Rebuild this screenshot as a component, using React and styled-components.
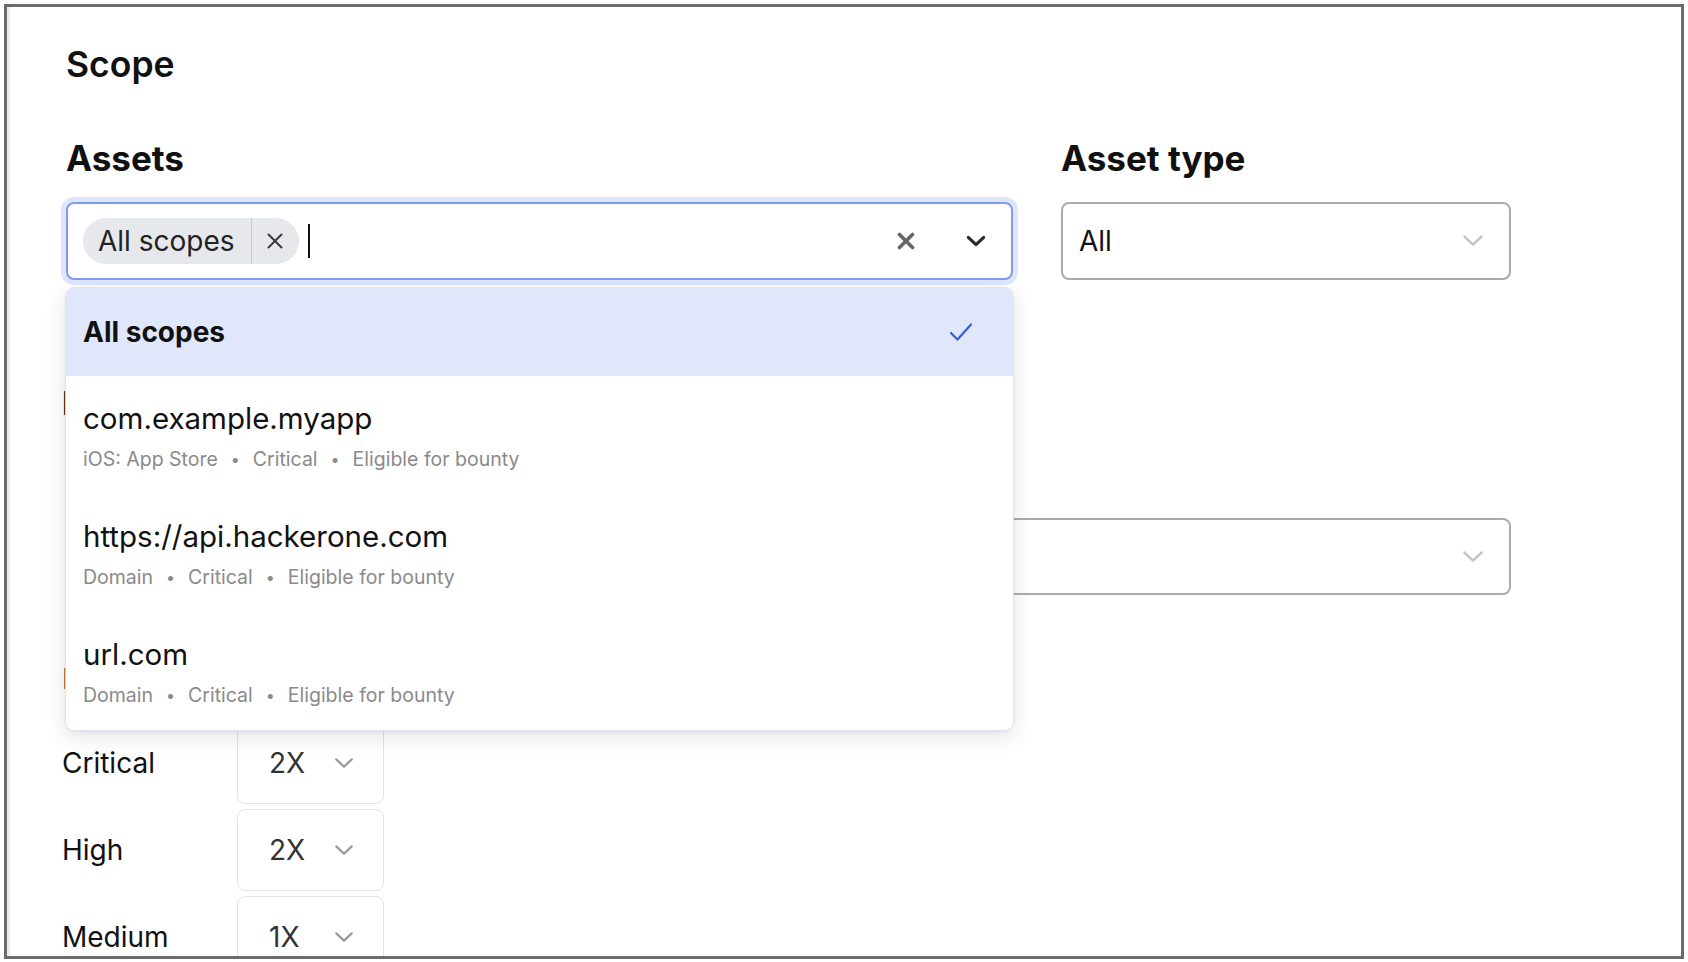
import React from 'react';
import styled, { createGlobalStyle } from 'styled-components';

const Global = createGlobalStyle`
  html, body { margin: 0; padding: 0; background: #fff; }
  body { font-family: Inter, "Noto Sans", sans-serif; color: #111; }
  * { box-sizing: border-box; }
`;

const Frame = styled.div`
  margin: 4px;
  width: 1680px;
  height: 955px;
  border: 3px solid #6b6b6b;
  box-shadow: inset 3px 0 0 #ececec;
  overflow: hidden;
  background: #fff;
  padding: 38px 0 0 59px;
`;

const Title = styled.h1`
  margin: 0;
  font-size: 35.5px;
  font-weight: 600;
  line-height: 40px;
  color: #111;
`;

const FieldsRow = styled.div`
  display: flex;
  gap: 48px;
  margin-top: 53px;
`;

const Column = styled.div`
  width: ${(p) => p.$w}px;
  display: flex;
  flex-direction: column;
`;

const Label = styled.div`
  font-size: 35px;
  font-weight: 700;
  line-height: 40px;
  margin-bottom: 24px;
  color: #111;
`;

const InputWrap = styled.div`
  position: relative;
`;

const MultiInput = styled.div`
  height: 78px;
  border: 2px solid #809cf0;
  border-radius: 8px;
  box-shadow: 0 0 0 5px #dfe5fb;
  display: flex;
  align-items: center;
  padding: 0 15px 0 15px;
  background: #fff;
`;

const Chip = styled.div`
  height: 46px;
  border-radius: 23px;
  background: #e7e8ec;
  display: flex;
  align-items: center;
  overflow: hidden;
`;

const ChipText = styled.span`
  font-size: 28px;
  line-height: 46px;
  padding: 0 16px 0 15px;
  color: #222;
  border-right: 1px solid #c9c9cd;
`;

const ChipRemove = styled.span`
  width: 47px;
  height: 46px;
  display: flex;
  align-items: center;
  justify-content: center;
`;

const Caret = styled.span`
  width: 2px;
  height: 34px;
  background: #111;
  margin-left: 9px;
`;

const Spacer = styled.span`
  flex: 1;
`;

const IconBox = styled.span`
  width: 40px;
  height: 40px;
  display: flex;
  align-items: center;
  justify-content: center;
  margin-left: ${(p) => p.$ml || 0}px;
`;

const Menu = styled.div`
  position: absolute;
  top: 86px;
  left: 0;
  right: 0;
  z-index: 5;
  background: #fff;
  border-radius: 8px;
  overflow: hidden;
  box-shadow: 0 0 0 1px rgba(220, 226, 245, 0.9), 0 2px 4px rgba(0, 0, 0, 0.05), 0 6px 22px rgba(0, 0, 0, 0.12);
`;

const SelectedOption = styled.div`
  height: 88px;
  background: #e1e7fb;
  display: flex;
  align-items: center;
  justify-content: space-between;
  padding: 0 40px 0 17px;
  font-size: 28px;
  font-weight: 700;
  color: #111;
`;

const Option = styled.div`
  height: 118px;
  padding: 24px 17px 0;
`;

const OptionTitle = styled.div`
  font-size: 29.5px;
  line-height: 36px;
  color: #111;
`;

const OptionMeta = styled.div`
  margin-top: 11px;
  font-size: 19.5px;
  line-height: 24px;
  color: #8a8a8a;
  display: flex;
  align-items: center;
`;

const Dot = styled.span`
  margin: 0 13px;
  font-size: 16px;
`;

const Select = styled.div`
  height: ${(p) => p.$h || 78}px;
  border: 2px solid #ababab;
  border-radius: 8px;
  display: flex;
  align-items: center;
  justify-content: space-between;
  padding: 0 25px 0 16px;
  font-size: 28px;
  color: #111;
  background: #fff;
`;

const Lower = styled.div`
  margin-left: -4px;
`;

const SectionHeading = styled.div`
  margin-top: 104px;
  font-size: 32px;
  font-weight: 700;
  line-height: 40px;
`;

const WideSelect = styled(Select)`
  margin: 94px 0 0 4px;
  width: 1445px;
`;

const SubLabel = styled.div`
  margin-top: 66px;
  font-size: 28px;
  line-height: 36px;
`;

const MultList = styled.div`
  margin-top: 25px;
  display: flex;
  flex-direction: column;
  gap: 5px;
`;

const MultRow = styled.div`
  display: flex;
  align-items: center;
`;

const MultLabel = styled.div`
  width: 175px;
  font-size: 28px;
  color: #111;
`;

const MultBox = styled.div`
  width: 147px;
  height: 82px;
  border: 1px solid #e3e3e3;
  border-radius: 8px;
  display: flex;
  align-items: center;
  justify-content: space-between;
  padding: 0 29px 0 31px;
  font-size: 28px;
  color: #333;
`;

const Chevron = ({ color = '#c4c4c4', w = 22, sw = 2.5 }) => (
  <svg width={w} height={w * 0.6} viewBox="0 0 22 13" fill="none">
    <path d="M2.5 2.5l8.5 8 8.5-8" stroke={color} strokeWidth={sw} strokeLinecap="round" strokeLinejoin="round" />
  </svg>
);

const XIcon = ({ color = '#333', size = 18, sw = 2 }) => (
  <svg width={size} height={size} viewBox="0 0 18 18" fill="none">
    <path d="M2.5 2.5l13 13M15.5 2.5l-13 13" stroke={color} strokeWidth={sw} strokeLinecap="round" />
  </svg>
);

const Check = () => (
  <svg width="24" height="20" viewBox="0 0 24 20" fill="none">
    <path d="M2 11l6.5 6.5L22 2.5" stroke="#3b5ce0" strokeWidth="2.2" strokeLinecap="round" strokeLinejoin="round" />
  </svg>
);

const options = [
  { title: 'com.example.myapp', meta: ['iOS: App Store', 'Critical', 'Eligible for bounty'] },
  { title: 'https://api.hackerone.com', meta: ['Domain', 'Critical', 'Eligible for bounty'] },
  { title: 'url.com', meta: ['Domain', 'Critical', 'Eligible for bounty'] },
];

const multipliers = [
  { label: 'Critical', value: '2X' },
  { label: 'High', value: '2X' },
  { label: 'Medium', value: '1X' },
];

export default function App() {
  return (
    <>
      <Global />
      <Frame>
        <Title>Scope</Title>
        <FieldsRow>
          <Column $w={947}>
            <Label>Assets</Label>
            <InputWrap>
              <MultiInput>
                <Chip>
                  <ChipText>All scopes</ChipText>
                  <ChipRemove>
                    <XIcon color="#3a3a3a" size={18} sw={2} />
                  </ChipRemove>
                </Chip>
                <Caret />
                <Spacer />
                <IconBox>
                  <XIcon color="#666" size={18} sw={3.6} />
                </IconBox>
                <IconBox $ml={30}>
                  <Chevron color="#2a2a2a" w={20} sw={3.4} />
                </IconBox>
              </MultiInput>
              <Menu>
                <SelectedOption>
                  <span>All scopes</span>
                  <Check />
                </SelectedOption>
                {options.map((o) => (
                  <Option key={o.title}>
                    <OptionTitle>{o.title}</OptionTitle>
                    <OptionMeta>
                      {o.meta.map((m, i) => (
                        <React.Fragment key={m}>
                          {i > 0 && <Dot>•</Dot>}
                          <span>{m}</span>
                        </React.Fragment>
                      ))}
                    </OptionMeta>
                  </Option>
                ))}
              </Menu>
            </InputWrap>
          </Column>
          <Column $w={450}>
            <Label>Asset type</Label>
            <Select>
              <span>All</span>
              <Chevron />
            </Select>
          </Column>
        </FieldsRow>
        <Lower>
          <SectionHeading>Bounty</SectionHeading>
          <WideSelect $h={77}>
            <span>Any</span>
            <Chevron />
          </WideSelect>
          <SubLabel>Multipliers</SubLabel>
          <MultList>
            {multipliers.map((m) => (
              <MultRow key={m.label}>
                <MultLabel>{m.label}</MultLabel>
                <MultBox>
                  <span>{m.value}</span>
                  <Chevron color="#9a9a9a" w={20} sw={2.5} />
                </MultBox>
              </MultRow>
            ))}
          </MultList>
        </Lower>
      </Frame>
    </>
  );
}
